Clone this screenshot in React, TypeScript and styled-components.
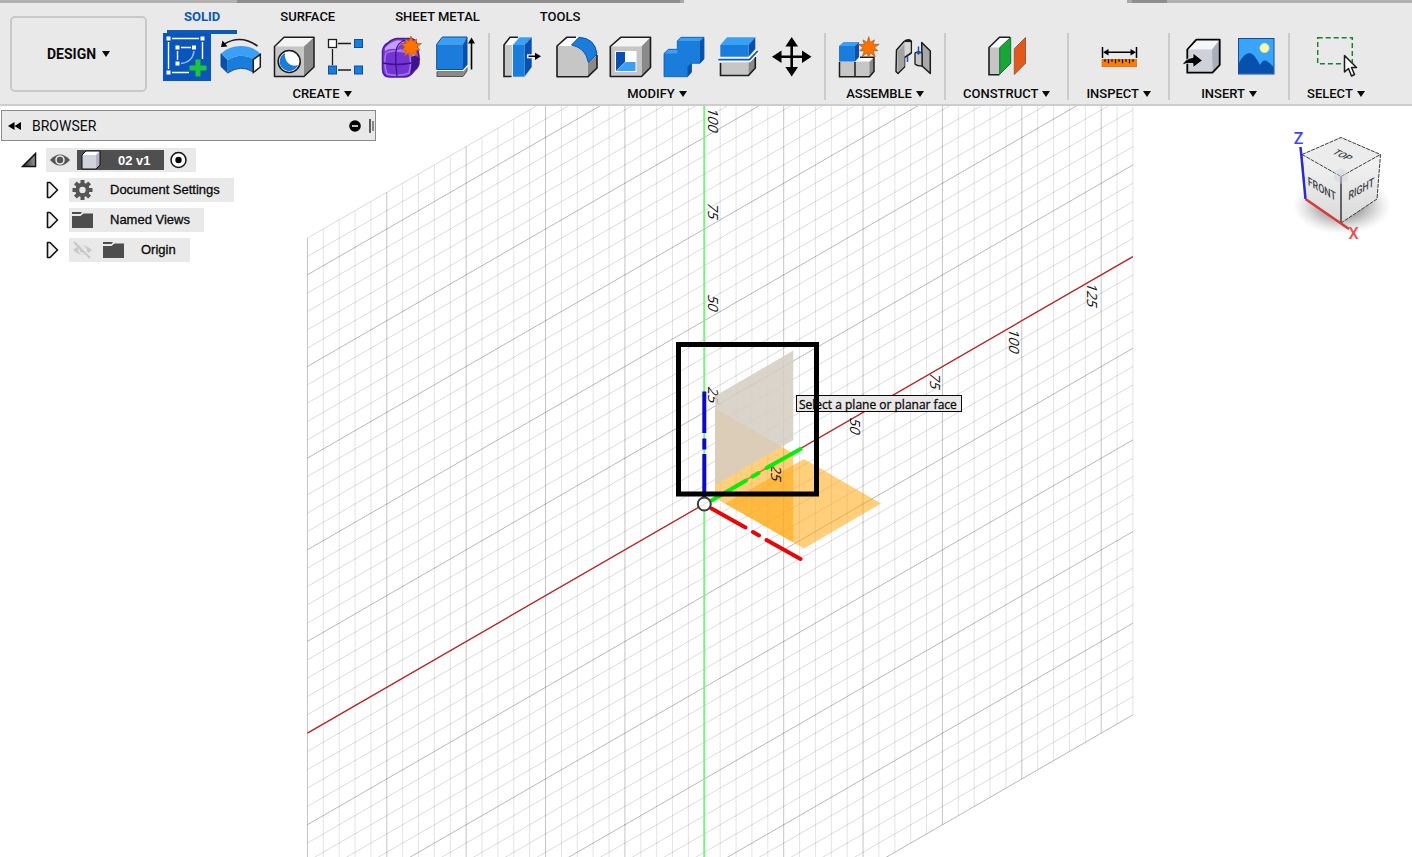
import React from "react";
import styled, { createGlobalStyle } from "styled-components";

const GlobalStyle = createGlobalStyle`
  *, *::before, *::after { box-sizing: border-box; }
  body {
    margin: 0;
    background: #fff;
    color: #0a0a0a;
    font-family: Roboto, "Liberation Sans", sans-serif;
  }
  button { font: inherit; color: inherit; background: none; border: 0; padding: 0; }
`;

const Page = styled.div`
  display: flex;
  flex-direction: column;
  min-height: 100vh;
`;

/* ---------- document tab strip ---------- */

const DocStrip = styled.div`
  display: flex;
  height: 3px;
`;

const DocTab = styled.span<{ $grow: number; $tone: string }>`
  flex: ${(p) => p.$grow} 1 0;
  background: ${(p) => p.$tone};
`;

/* ---------- toolbar ---------- */

const Toolbar = styled.header`
  display: flex;
  height: 103px;
  padding-left: 10px;
  gap: 16px;
  background: #e9e9e9;
  border-bottom: 2px solid #cdcdcd;
`;

const WorkspaceButton = styled.button`
  display: flex;
  align-items: center;
  justify-content: center;
  gap: 6px;
  flex: none;
  width: 137px;
  height: 76px;
  margin-top: 13px;
  border: 2px solid #c8c8c8;
  border-radius: 5px;
  font-size: 14px;
  font-weight: 700;
`;

const Ribbon = styled.div`
  display: flex;
  flex-direction: column;
  flex: none;
`;

const TabList = styled.nav`
  display: flex;
  gap: 26px;
  height: 31px;
  padding-left: 4px;
`;

const Tab = styled.button<{ $active?: boolean }>`
  padding: 0 17px;
  font-size: 13px;
  line-height: 24px;
  font-weight: ${(p) => (p.$active ? 700 : 500)};
  color: ${(p) => (p.$active ? "#0a58b8" : "#0a0a0a")};
  border-bottom: 4px solid ${(p) => (p.$active ? "#0a5cb8" : "transparent")};
`;

const Panels = styled.div`
  display: flex;
  height: 67px;
  margin-top: -1px;
`;

const Panel = styled.section<{ $last?: boolean; $first?: boolean }>`
  display: flex;
  flex-direction: column;
  align-items: center;
  padding: ${(p) => (p.$first ? "0 7px 0 0" : "0 8px")};
  border-right: 2px solid ${(p) => (p.$last ? "transparent" : "#cbcbcb")};
`;

const ToolRow = styled.div`
  display: flex;
  gap: 6px;
`;

const Tool = styled.button<{ $active?: boolean }>`
  width: 48px;
  height: 48px;
  background: ${(p) => (p.$active ? "#0a55bb" : "transparent")};
`;

const IconSvg = styled.svg`
  display: block;
  width: 48px;
  height: 48px;
  overflow: visible;
`;

const PanelLabel = styled.button`
  display: flex;
  align-items: center;
  gap: 4px;
  padding: 0 9px;
  margin-top: 2px;
  font-size: 13px;
  line-height: 21px;
  font-weight: 500;
`;

const CaretSvg = styled.svg`
  display: block;
  width: 8px;
  height: 6px;
`;

const Caret = () => (
  <CaretSvg viewBox="0 0 8 6" aria-hidden="true">
    <path d="M0 0H8L4 6Z" fill="#0a0a0a" />
  </CaretSvg>
);

/* ---------- tool icons ---------- */

const K = "#1c1c1c";
const B1 = "#3aa0f5";
const B2 = "#1b7ddb";
const B3 = "#0850ae";

const burst = (cx: number, cy: number, outer: number, inner: number) =>
  Array.from({ length: 20 }, (_, i) => {
    const r = i % 2 ? inner : i % 4 ? outer * 0.88 : outer;
    const a = (Math.PI * i) / 10 - Math.PI / 2;
    return `${(cx + r * Math.cos(a)).toFixed(2)},${(cy + r * Math.sin(a)).toFixed(2)}`;
  }).join(" ");

const Icon = ({ children }: { children: React.ReactNode }) => (
  <IconSvg viewBox="0 0 48 48" aria-hidden="true">
    {children}
  </IconSvg>
);

const SketchIcon = () => (
  <Icon>
    <g fill="none" stroke="#fff" strokeWidth="1.4">
      <path d="M9 5.5H36M5.5 9V36M39.5 9V26M9 39.5H26M14.5 18V27M18 14.5H28" />
      <path d="M31 18Q30 29 18 30.5" stroke="#8cc4ff" />
    </g>
    <g fill="#fff">
      <rect x="3.500" y="3.500" width="4" height="4" />
      <rect x="37.500" y="3.500" width="4" height="4" />
      <rect x="3.500" y="37.500" width="4" height="4" />
      <rect x="12.500" y="12.500" width="4" height="4" />
      <rect x="29" y="12.500" width="4" height="4" />
      <rect x="12.500" y="28.500" width="4" height="4" />
    </g>
    <path d="M32.500 26.500h5v6h6v5h-6v6h-5v-6h-6v-5h6z" fill="#1fc43a" />
  </Icon>
);

const RevolveIcon = () => (
  <Icon>
    <path d="M4 20.500L10.700 27V40L4 33.500Z" fill={B3} />
    <path d="M10.700 27Q23.500 19 36.300 25.700V39Q23.500 31 10.700 40Z" fill={B2} />
    <path d="M4 20.500Q12 13 23.700 13Q36 13 43.700 21L36.300 26Q23.500 19 10.700 27Z" fill={B1} />
    <path d="M4 20.500V33.500L10.700 40Q23.500 31 36.300 39" fill="none" stroke="#0a4ea3" />
    <path d="M43.300 21.500V34L36.300 39.500V26.500Z" fill="#fff" stroke={K} strokeWidth="1.500" />
    <path d="M40.500 13Q24 1 7 11" fill="none" stroke={K} strokeWidth="1.600" />
    <path d="M4 14L5.500 7.500L10.500 13.500Z" fill="#000" />
  </Icon>
);

const HoleIcon = () => (
  <Icon>
    <path d="M3.500 13.500L13 4.300H43L33 13.500Z" fill="#f4f4f4" />
    <path d="M33 13.500L43 4.300V34L33 43.500Z" fill="#8a8a8a" />
    <path d="M3.500 13.500H33V43.500H3.500Z" fill="#c6c6c6" />
    <path d="M3.500 13.500L13 4.300H43V34L33 43.500H3.500Z" fill="none" stroke={K} strokeWidth="1.500" strokeLinejoin="round" />
    <circle cx="18.200" cy="28.500" r="11" fill="#fff" stroke={K} strokeWidth="1.600" />
    <path d="M14 20A9.500 9.500 0 1 0 27 32Q21 34 17 30Q13 25 14 20Z" fill={B2} />
  </Icon>
);

const PatternIcon = () => (
  <Icon>
    <path d="M13 10.500H26M13 37H26M7.500 16V32" stroke={K} strokeWidth="1.300" />
    <rect x="3.500" y="6.500" width="8" height="8" fill="#fff" stroke={K} strokeWidth="1.300" />
    <g fill={B2} stroke="#0b4f9f">
      <rect x="29.500" y="6.500" width="8" height="8" />
      <rect x="3.500" y="33" width="8" height="8" />
      <rect x="29.500" y="33" width="8" height="8" />
    </g>
  </Icon>
);

const FormIcon = () => (
  <Icon>
    <path d="M3.500 18Q4.500 12 9 10Q13 6 18 5.500H32Q37 6 38 12L40 23V30Q40 34 35 38Q31 44 25 44H11Q3.500 44 3.500 36Z" fill="#7a3fd6" stroke="#4b1aa0" strokeWidth="1.500" />
    <path d="M32 22L40 24V31Q38 36 31 41Q33 34 32 22Z" fill="#3d1490" />
    <path d="M6 15Q10 10 16 8Q20 6 26 9Q20 11 18 16Q10 15 6 18Z" fill="#c7a0ff" />
    <path d="M18 17Q25 15 31 19Q33 17 37 16V22L32 24Q24 20 18 22Z" fill="#b487f5" />
    <path d="M7 20Q14 16 30 20Q33 28 30 40Q20 44 8 41Q4 30 7 20Z" fill="#7434d4" stroke="#a876f2" strokeWidth="1.400" />
    <path d="M17 18Q16 30 18 43M4 30Q18 33 32 30Q37 28 41 26M17 18Q18 10 26 7" fill="none" stroke="#3b128c" strokeWidth="1.300" />
    <polygon points={burst(32, 14, 11, 6)} fill="#ff7200" stroke="#b85a10" strokeWidth="0.700" />
  </Icon>
);

const ExtrudeIcon = () => (
  <Icon>
    <path d="M4 38.500H30.500L34 34V38L30 43.500H4Z" fill="#8a8a8a" stroke="#555" />
    <path d="M3.500 37.500H30.500L35 32" fill="none" stroke="#fff" strokeWidth="1.500" />
    <path d="M3.700 11.300L9.300 4H34L30 11.300Z" fill={B1} />
    <path d="M30 11.300L34 4V31.500L30 36.500Z" fill={B3} />
    <path d="M3.700 11.300H30V36.500H3.700Z" fill={B2} />
    <path d="M3.700 11.300L9.300 4H34V31.500L30 36.500H3.700Z" fill="none" stroke="#0a4ea3" />
    <path d="M38.500 9V36.500" stroke="#000" strokeWidth="1.600" />
    <path d="M38.500 4.500L42 10.500H35Z" fill="#000" />
  </Icon>
);

const PressPullIcon = () => (
  <Icon>
    <path d="M6 12L12 4.300H20L14 12V43.500H6Z" fill="#c6c6c6" />
    <path d="M6 12L12 4.300H21L14 12Z" fill="#fff" />
    <path d="M13.500 43.500H6V12L12 4.300H20" fill="none" stroke={K} strokeWidth="1.600" />
    <path d="M15 12L21.500 4.300H33.700L26.500 12Z" fill={B1} />
    <path d="M26.500 12L33.700 4.300V34L26.500 43.700Z" fill={B3} />
    <path d="M15 12H26.500V43.700H15Z" fill={B2} />
    <path d="M29 23.300H39" stroke="#fff" strokeWidth="4" />
    <path d="M30.500 23.300H38" stroke="#000" strokeWidth="1.600" />
    <path d="M43 23.300L37 19.700V27Z" fill="#000" />
  </Icon>
);

const FilletIcon = () => (
  <Icon>
    <path d="M5 13L14.700 4.300H27L20 13Z" fill="#fff" />
    <path d="M36 30L45 22V35L36 43.700Z" fill="#8a8a8a" />
    <path d="M5 13H19.500Q34 15 36 30V43.700H5Z" fill="#c6c6c6" />
    <path d="M45 22V35L36 43.700H5V13L14.700 4.300H24" fill="none" stroke={K} strokeWidth="1.600" strokeLinejoin="round" />
    <path d="M19.500 12L27 4.300Q43 5 45 21L36.300 29.500Q34 15 19.500 12Z" fill={B2} stroke={B3} />
  </Icon>
);

const ShellIcon = () => (
  <Icon>
    <path d="M4.300 13.500L14.700 4.300H44.500L35.500 13.500Z" fill="#f4f4f4" />
    <path d="M35.500 13.500L44.500 4.300V34.500L35.500 43.500Z" fill="#8a8a8a" />
    <path d="M4.300 13.500H35.500V43.500H4.300Z" fill="#c6c6c6" />
    <path d="M4.300 13.500L14.700 4.300H44.500V34.500L35.500 43.500H4.300Z" fill="none" stroke={K} strokeWidth="1.600" strokeLinejoin="round" />
    <rect x="9" y="18" width="21.500" height="21" fill="#fff" />
    <path d="M10 19H19V29L10 38Z" fill={B3} />
    <path d="M19.500 29H29.500V38H10.500Z" fill={B1} />
  </Icon>
);

const CombineIcon = () => (
  <Icon>
    <path d="M4 20.500L8.500 16.300H17.300V8L21 4.300H44V26L40 30.300H31.500V39L27.500 43.700H4Z" fill={B2} />
    <path d="M4 20.500L8.500 16.300H17.300V20.500ZM17.300 8L21 4.300H44L40 8Z" fill={B1} />
    <path d="M40 8L44 4.300V26L40 30.300ZM27.500 33.500L31.500 30.300V39L27.500 43.700Z" fill={B3} />
    <path d="M4 20.500L8.500 16.300H17.300V8L21 4.300H44V26L40 30.300H31.500V39L27.500 43.700H4Z" fill="none" stroke="#0a58b0" strokeWidth="0.800" />
  </Icon>
);

const SplitIcon = () => (
  <Icon>
    <path d="M6.500 29.500H34.500V42.500H6.500Z" fill="#c6c6c6" />
    <path d="M34.500 30L41.300 23V35L34.500 42.500Z" fill="#8a8a8a" />
    <path d="M6.500 30V42.500H34.500L41.300 35V24" fill="none" stroke={K} strokeWidth="1.600" />
    <path d="M6.300 12L13 4.300H41.300L34.500 12Z" fill={B1} />
    <path d="M34.500 12L41.300 4.300V16L34.500 23.700Z" fill={B3} />
    <path d="M6.300 12H34.500V23.700H6.300Z" fill={B2} />
    <path d="M4.300 26.700H35.500L43.700 18" fill="none" stroke="#fff" strokeWidth="4.500" />
    <path d="M4.300 26.700H35.500L43.700 18" fill="none" stroke="#0a58b8" strokeWidth="1.800" />
  </Icon>
);

const MoveIcon = () => (
  <Icon>
    <path d="M23.700 10V37M10 23.700H37" stroke="#000" strokeWidth="2.600" />
    <path d="M23.700 4L30 13.500H17.400ZM23.700 43.500L30 34H17.400ZM4 23.700L13.500 17.400V30ZM43.500 23.700L34 17.400V30Z" fill="#000" />
  </Icon>
);

const ComponentIcon = () => (
  <Icon>
    <path d="M21 28.500L26 24.300H40V38.500L35.500 43.700H5.500V28.500Z" fill="#c6c6c6" />
    <path d="M21 28.500L26 24.300H40L35.500 28.500Z" fill="#fff" />
    <path d="M35.500 29L40 24.300V38.500L35.500 43.700Z" fill="#8a8a8a" />
    <path d="M5.500 29V43.700H35.500L40 38.500V24.300H26M21 29V43.700" fill="none" stroke={K} strokeWidth="1.500" />
    <path d="M5 13L9.500 9H25L21 13Z" fill={B1} />
    <path d="M21 13L25 9V24L21 28.500Z" fill={B3} />
    <path d="M5 13H21V28.500H5Z" fill={B2} />
    <polygon points={burst(34.700, 14.700, 11, 5.5)} fill="#ff7200" stroke="#a35a1c" strokeWidth="0.700" />
  </Icon>
);

const JointIcon = () => (
  <Icon>
    <path d="M8.500 17L16 8.500Q20 5.500 23.300 8V20L16.500 24.500V34L10 40.500L8 38.500Z" fill="#c2c2c2" stroke={K} strokeWidth="1.500" strokeLinejoin="round" />
    <path d="M10 18L16 12L16.500 24V33L10 39Z" fill="#a2a2a2" />
    <path d="M17 9.500H22.500V19L17 23Z" fill="#d8d8d8" />
    <path d="M17 8H23" stroke={K} strokeWidth="2" />
    <path d="M19.500 23V29M30.500 13.500V20" stroke="#0a58c8" strokeWidth="1.500" />
    <path d="M33.700 9.500L42.300 18V40.500L34 33Z" fill="#a8a8a8" stroke={K} strokeWidth="1.500" strokeLinejoin="round" />
    <path d="M27 20Q30 18 34 20V33Q29 33 27 31Z" fill="#c6c6c6" stroke={K} strokeWidth="1.300" />
    <path d="M27.500 19L30.500 22L33.500 19Z" fill="#0a58c8" />
  </Icon>
);

const PlaneIcon = () => (
  <Icon>
    <path d="M6 14.500L16.500 4.300H28L16.500 14.500Z" fill="#fff" />
    <path d="M6 14.500H16.500V41.700H6Z" fill="#c6c6c6" />
    <path d="M16.500 41.700H6V14.500L16.500 4.300H27" fill="none" stroke={K} strokeWidth="1.600" />
    <path d="M16.700 14.700L27.700 4.300V30.300L16.700 41.300Z" fill="#17a637" stroke="#1d6b2c" />
    <path d="M31.300 15.700L42.500 4.500V30.300L31.300 41.500Z" fill="#e25a1b" stroke="#9c5a3a" />
  </Icon>
);

const MeasureIcon = () => (
  <Icon>
    <path d="M7.500 14V25M41.500 14V25M10 19.300H39" stroke="#000" strokeWidth="1.500" />
    <path d="M8 19.300L13.500 16V22.600ZM41 19.300L35.500 16V22.600Z" fill="#000" />
    <rect x="7" y="26.300" width="34.700" height="7.400" fill="#ff7a00" stroke="#c06a20" strokeWidth="0.600" />
    <path d="M10 26.300v2.500M13.500 26.300v4M17 26.300v2.500M20.500 26.300v4M24 26.300v2.500M27.500 26.300v4M31 26.300v2.500M34.500 26.300v4M38 26.300v2.500" stroke="#000" strokeWidth="1.200" />
  </Icon>
);

const InsertIcon = () => (
  <Icon>
    <path d="M9.300 16.500L18.300 6.700H41.700L34 16.500Z" fill="#f5f6f9" />
    <path d="M34 16.500L41.700 6.700V32L34.500 39.700Z" fill="#a9aebb" />
    <path d="M9.300 16.500H34V39.700H9.300Z" fill="#ced1da" />
    <path d="M9.300 16.500L18.300 6.700H41.700V32L34.500 39.700H9.300Z" fill="none" stroke="#000" strokeWidth="1.800" strokeLinejoin="round" />
    <path d="M4 32Q8 25 15 24.500V20L24.500 27.500L15 34.500V30.500Q9 29.500 4 32Z" fill="#000" stroke="#f1f2f5" strokeWidth="0.800" />
  </Icon>
);

const ImageIcon = () => (
  <Icon>
    <rect x="6.500" y="5.500" width="35.500" height="35.500" fill="#38a4fb" stroke="#0d5099" />
    <path d="M7 30Q12 20 17.500 20Q22 20 28 32Q32 25 36 29Q39 31 41.500 34V40.500H7Z" fill="#0850ae" />
    <circle cx="32.500" cy="15" r="4.500" fill="#fdf6a6" stroke="#e8e6a0" />
  </Icon>
);

const SelectIcon = () => (
  <Icon>
    <rect x="5.700" y="4.700" width="34.600" height="26" fill="none" stroke="#178233" strokeWidth="1.500" strokeDasharray="5 3" />
    <path d="M32.500 22.500V39L36.500 35.500L39.500 43L42.500 41.500L39.500 34.500H44.500Z" fill="#fff" stroke={K} strokeWidth="1.500" strokeLinejoin="round" />
  </Icon>
);

type PanelDef = { label: string; tools: [string, React.FC][] };

const PANELS: PanelDef[] = [
  {
    label: "CREATE",
    tools: [
      ["Create Sketch", SketchIcon],
      ["Revolve", RevolveIcon],
      ["Hole", HoleIcon],
      ["Pattern", PatternIcon],
      ["Create Form", FormIcon],
      ["Extrude", ExtrudeIcon],
    ],
  },
  {
    label: "MODIFY",
    tools: [
      ["Press Pull", PressPullIcon],
      ["Fillet", FilletIcon],
      ["Shell", ShellIcon],
      ["Combine", CombineIcon],
      ["Split Body", SplitIcon],
      ["Move", MoveIcon],
    ],
  },
  {
    label: "ASSEMBLE",
    tools: [
      ["New Component", ComponentIcon],
      ["Joint", JointIcon],
    ],
  },
  { label: "CONSTRUCT", tools: [["Offset Plane", PlaneIcon]] },
  { label: "INSPECT", tools: [["Measure", MeasureIcon]] },
  {
    label: "INSERT",
    tools: [
      ["Insert Derive", InsertIcon],
      ["Canvas", ImageIcon],
    ],
  },
  { label: "SELECT", tools: [["Select", SelectIcon]] },
];

/* ---------- viewport ---------- */

const Viewport = styled.main`
  position: relative;
  flex: 1;
  min-height: 300px;
  overflow: hidden;
`;

const SceneSvg = styled.svg`
  position: absolute;
  inset: 0;
  width: 100%;
  height: 100%;
`;

const ORIGIN = { x: 704.3, y: 504 };
const CELL = 15.875;
const RISE = 18.33;
const SLOPE = 9.163;
const COLS = { from: -25, to: 27 };
const ROWS = { from: -27, to: 25 };

const range = (from: number, to: number) => Array.from({ length: to - from + 1 }, (_, i) => from + i);
const gridX = (c: number) => ORIGIN.x + c * CELL;
const gridY = (c: number, r: number) => ORIGIN.y - c * SLOPE + r * RISE;

const AXIS_LABELS: [string, number, number][] = [
  ["100", 708, 107],
  ["75", 708, 202],
  ["50", 708, 294],
  ["25", 708, 386],
  ["125", 1087, 282],
  ["100", 1009, 328],
  ["75", 930, 372],
  ["50", 850, 417],
  ["25", 771, 464],
];

const AxisText = styled.text`
  font: 400 14px "Open Sans", sans-serif;
  fill: #111;
`;

const HintText = styled.text`
  font: 500 12px "Open Sans", sans-serif;
  fill: #0a0a0a;
  stroke: #0a0a0a;
  stroke-width: 0.3px;
`;

const Scene = () => (
  <SceneSvg viewBox="0 106 1412 751" preserveAspectRatio="xMidYMid slice" role="img" aria-label="Sketch plane selection">
    <g fill="none">
      {range(COLS.from, COLS.to).map((c) => (
        <path
          key={`c${c}`}
          d={`M${gridX(c)} ${gridY(c, ROWS.from)}V${gridY(c, ROWS.to)}`}
          stroke="#000"
          strokeOpacity={c % 5 === 0 ? 0.23 : 0.11}
        />
      ))}
      {range(ROWS.from, ROWS.to).map((r) => (
        <path
          key={`r${r}`}
          d={`M${gridX(COLS.from)} ${gridY(COLS.from, r)}L${gridX(COLS.to)} ${gridY(COLS.to, r)}`}
          stroke="#000"
          strokeOpacity={r % 5 === 0 ? 0.28 : 0.14}
        />
      ))}
    </g>
    <path d="M704.300 106V857" stroke="#7df07d" strokeWidth="2" />
    <path
      d={`M${gridX(COLS.from)} ${gridY(COLS.from, 0)}L${gridX(COLS.to)} ${gridY(COLS.to, 0)}`}
      stroke="#bf2222"
      strokeWidth="1.300"
    />

    <g fill="#ffa711" fillOpacity="0.55">
      <path d="M715 408.300L793.300 453.500V542.500L715 498Z" />
      <path d="M725 503.500L804 459L881 503.500L804 548.500Z" />
    </g>

    {AXIS_LABELS.map(([t, x, y]) => (
      <AxisText key={`${t}-${x}`} transform={`matrix(0 1 -1 -0.35 ${x} ${y})`}>
        {t}
      </AxisText>
    ))}

    <path d="M715 396L793.300 350.500V440L715 485Z" fill="#d5cdc1" fillOpacity="0.86" />

    <g fill="none" strokeWidth="4">
      <path d="M704.300 391.500V433M704.300 438.500V449.500M704.300 454V498" stroke="#0a0acb" />
      <g strokeLinecap="round">
        <path d="M711.500 500.500L746 480.500M752.500 476.500L758.500 473M766.500 468L800.500 449" stroke="#06ee06" />
        <path d="M711.500 508.500L745.500 527.500M753 532L759 535.500M766.500 540L800.500 559" stroke="#e80606" />
      </g>
    </g>
    <circle cx="704.300" cy="504" r="6.500" fill="#fff" fillOpacity="0.85" stroke="#3c3c3c" strokeWidth="2" />

    <rect x="796.500" y="395.500" width="165" height="16" fill="#e9e7e8" stroke="#0a0a0a" />
    <path d="M678.500 344.500H816.500V494H678.500Z" fill="none" stroke="#000" strokeWidth="5" />
    <HintText x="799" y="409">Select a plane or planar face</HintText>
  </SceneSvg>
);

/* ---------- view cube ---------- */

const CubeSvg = styled.svg`
  position: absolute;
  top: 19px;
  right: 17px;
  width: 115px;
  height: 125px;
`;

const FaceText = styled.text`
  font: 500 12px Roboto, sans-serif;
  fill: #3c4148;
  text-anchor: middle;
`;

const AxisLetter = styled.text<{ $tone: string }>`
  font: 500 16px Roboto, sans-serif;
  fill: ${(p) => p.$tone};
  text-anchor: middle;
`;

const ViewCube = () => (
  <CubeSvg viewBox="1280 125 115 125" role="img" aria-label="View cube">
    <defs>
      <radialGradient id="cubeShadow">
        <stop offset="0.300" stopColor="#666" stopOpacity="0.7" />
        <stop offset="0.800" stopColor="#888" stopOpacity="0.180" />
        <stop offset="1" stopColor="#999" stopOpacity="0" />
      </radialGradient>
      <linearGradient id="cubeFront" x1="0" y1="0" x2="0" y2="1">
        <stop offset="0" stopColor="#f4f4f4" />
        <stop offset="1" stopColor="#d9d9d9" />
      </linearGradient>
    </defs>
    <ellipse cx="1342" cy="206" rx="49" ry="28" fill="url(#cubeShadow)" />
    <path d="M1302 154.500L1341 176.500V223L1305.500 199Z" fill="url(#cubeFront)" />
    <path d="M1341 176.500L1380.500 154.500L1377 199L1341 223Z" fill="url(#cubeFront)" />
    <path d="M1302 154.500L1341 137.500L1380.500 154.500L1341 176.500Z" fill="#ececec" />
    <g fill="none" stroke="#3a3a3a">
      <path d="M1302 154.500L1341 137.500L1380.500 154.500L1377 199L1341 223L1305.500 199Z" strokeDasharray="4 1" />
      <path d="M1302 154.500L1341 176.500L1380.500 154.500" strokeDasharray="4 1" />
      <path d="M1341 176.500V223" strokeWidth="1.500" />
    </g>
    <path d="M1334 172L1341 168L1348 172V180L1341 184L1334 180Z" fill="#cfd4e4" fillOpacity="0.5" />
    <FaceText transform="matrix(0.7 0.34 -0.75 0.46 1339.500 157)">TOP</FaceText>
    <FaceText transform="matrix(0.74 0.42 0.05 1 1322 193)">FRONT</FaceText>
    <FaceText transform="matrix(0.74 -0.42 -0.05 1 1361 193)">RIGHT</FaceText>
    <path d="M1300.500 147L1305.500 199" stroke="#2b2bd2" strokeWidth="2.500" />
    <path d="M1305.500 199L1349 229" stroke="#d83a3a" strokeWidth="2.500" />
    <AxisLetter x="1298.500" y="144" $tone="#4444ee">Z</AxisLetter>
    <AxisLetter x="1353.500" y="239" $tone="#f04a4a">X</AxisLetter>
  </CubeSvg>
);

/* ---------- browser panel ---------- */

const BrowserPanel = styled.aside`
  position: relative;
  width: 375px;
  margin: 4px 0 0 1px;
`;

const BrowserHeader = styled.div`
  display: flex;
  align-items: center;
  height: 31px;
  padding: 0 1px 0 6px;
  border: 1px solid #8a8a8a;
  background: #e9e9e9;
`;

const BrowserTitle = styled.h2`
  flex: 1;
  margin: 0 0 0 11px;
  font-size: 14px;
  line-height: 16px;
  font-weight: 400;
`;

const HeaderButton = styled.button`
  display: flex;
  margin-right: 8px;
`;

const Collapse = styled.button`
  display: flex;
`;

const Tree = styled.ul`
  list-style: none;
  margin: 7px 0 0;
  padding: 0;
  display: flex;
  flex-direction: column;
  gap: 6px;
`;

const TreeRow = styled.li<{ $depth: number }>`
  display: flex;
  align-items: center;
  height: 24px;
  gap: ${(p) => (p.$depth ? 10 : 9)}px;
  padding-left: ${(p) => (p.$depth ? 45 : 20)}px;
`;

const Expander = styled.button`
  display: flex;
`;

const Node = styled.div`
  display: flex;
  align-items: center;
  height: 24px;
  padding: 0 14px 0 3px;
  background: #e9e9e9;
`;

const RootNode = styled(Node)`
  gap: 6px;
  padding: 0 9px 0 3px;
`;

const RootName = styled.button`
  display: flex;
  align-items: center;
  gap: 17px;
  height: 20px;
  padding: 0 13px 0 4px;
  background: #4f4f4f;
  color: #fff;
  font: 700 13px "Liberation Sans", sans-serif;
`;

const NodeName = styled.button`
  margin-left: 17px;
  font-family: "Liberation Sans", sans-serif;
  font-size: 13px;
  line-height: 20px;
  -webkit-text-stroke: 0.3px #0a0a0a;
`;

const ToggleButton = styled.button`
  display: flex;
  margin-right: 10px;
`;

const Glyph = ({ w, h, children }: { w: number; h: number; children: React.ReactNode }) => (
  <svg width={w} height={h} viewBox={`0 0 ${w} ${h}`} aria-hidden="true">
    {children}
  </svg>
);

const ClosedArrow = () => (
  <Expander aria-label="Expand">
    <Glyph w={13} h={18}>
      <path d="M1.500 1.500H4L11.500 9L4 16.500H1.500Z" fill="#f2f2f2" stroke="#111" strokeWidth="1.600" strokeLinejoin="round" />
    </Glyph>
  </Expander>
);

const Folder = () => (
  <Glyph w={21} h={18}>
    <path d="M0 1H10L8.500 3H0ZM0 5H8.500L11.500 2.500H21V17H0Z" fill="#4d4d4d" />
  </Glyph>
);

const Gear = () => (
  <Glyph w={21} h={20}>
    <g fill="#555">
      {range(0, 7).map((i) => (
        <rect key={i} x="8.500" y="0" width="4" height="5" transform={`rotate(${i * 45} 10.500 10)`} />
      ))}
    </g>
    <circle cx="10.500" cy="10" r="5.200" fill="none" stroke="#555" strokeWidth="4" />
  </Glyph>
);

const EyeOff = () => (
  <Glyph w={21} h={18}>
    <path d="M1 9Q10.500 0 20 9Q10.500 18 1 9Z" fill="#c8c8c8" />
    <circle cx="10.500" cy="9" r="3.500" fill="none" stroke="#e9e9e9" strokeWidth="1.500" />
    <path d="M4 0L19 17" stroke="#e9e9e9" strokeWidth="3" />
    <path d="M2 1L18 17" stroke="#c8c8c8" strokeWidth="2" />
  </Glyph>
);

const Browser = () => (
  <BrowserPanel>
    <BrowserHeader>
      <Collapse aria-label="Collapse browser">
        <Glyph w={13} h={10}>
          <path d="M0 5L6.500 1V9ZM6.500 5L13 1V9Z" fill="#000" />
        </Glyph>
      </Collapse>
      <BrowserTitle>BROWSER</BrowserTitle>
      <HeaderButton aria-label="Hide all">
        <Glyph w={12} h={12}>
          <circle cx="6" cy="6" r="5.800" fill="#000" />
          <path d="M3 6H9" stroke="#fff" strokeWidth="1.500" />
        </Glyph>
      </HeaderButton>
      <Glyph w={5} h={14}>
        <path d="M1 0V14" stroke="#111" strokeWidth="1.300" />
        <path d="M4 2V12" stroke="#555" strokeWidth="1.300" />
      </Glyph>
    </BrowserHeader>
    <Tree>
      <TreeRow $depth={0}>
        <Expander aria-label="Collapse">
          <Glyph w={16} h={16}>
            <defs>
              <linearGradient id="openArrow">
                <stop offset="0" stopColor="#222" />
                <stop offset="1" stopColor="#999" />
              </linearGradient>
            </defs>
            <path d="M1.500 14.500L14.500 1.500V14.500Z" fill="url(#openArrow)" stroke="#111" strokeWidth="1.500" />
          </Glyph>
        </Expander>
        <RootNode>
          <Expander aria-label="Toggle visibility">
            <Glyph w={22} h={16}>
              <path d="M1 8Q11 -3 21 8Q11 19 1 8Z" fill="#555" />
              <circle cx="11" cy="8" r="4" fill="#555" stroke="#e9e9e9" strokeWidth="1.600" />
            </Glyph>
          </Expander>
          <RootName>
            <Glyph w={20} h={20}>
              <path d="M1 5L5 1H19V15L15 19H1Z" fill="#fff" />
              <path d="M15 5L19 1V15L15 19Z" fill="#aeb4c2" />
              <path d="M1 5H15V19H1Z" fill="#cfd3dd" />
              <path d="M1 5L5 1H19V15L15 19H1Z" fill="none" stroke="#111" />
            </Glyph>
            02 v1
          </RootName>
          <Expander aria-label="Activate component">
            <Glyph w={17} h={18}>
              <circle cx="8.500" cy="9" r="7.500" fill="#fff" stroke="#111" strokeWidth="1.500" />
              <circle cx="8.500" cy="9" r="3.200" fill="#000" />
            </Glyph>
          </Expander>
        </RootNode>
      </TreeRow>
      <TreeRow $depth={1}>
        <ClosedArrow />
        <Node>
          <Gear />
          <NodeName>Document Settings</NodeName>
        </Node>
      </TreeRow>
      <TreeRow $depth={1}>
        <ClosedArrow />
        <Node>
          <Folder />
          <NodeName>Named Views</NodeName>
        </Node>
      </TreeRow>
      <TreeRow $depth={1}>
        <ClosedArrow />
        <Node>
          <ToggleButton aria-label="Show origin">
            <EyeOff />
          </ToggleButton>
          <Folder />
          <NodeName>Origin</NodeName>
        </Node>
      </TreeRow>
    </Tree>
  </BrowserPanel>
);

export default function App() {
  return (
    <Page>
      <GlobalStyle />
      <DocStrip>
        <DocTab $grow={237} $tone="#b0b0b0" />
        <DocTab $grow={443} $tone="#8e8e8e" />
        <DocTab $grow={4} $tone="#a8a8a8" />
        <DocTab $grow={443} $tone="#e9e9e9" />
        <DocTab $grow={5} $tone="#a8a8a8" />
        <DocTab $grow={35} $tone="#8e8e8e" />
        <DocTab $grow={245} $tone="#b0b0b0" />
      </DocStrip>
      <Toolbar>
        <WorkspaceButton>
          DESIGN <Caret />
        </WorkspaceButton>
        <Ribbon>
          <TabList aria-label="Toolbar tabs">
            <Tab $active>SOLID</Tab>
            <Tab>SURFACE</Tab>
            <Tab>SHEET METAL</Tab>
            <Tab>TOOLS</Tab>
          </TabList>
          <Panels>
            {PANELS.map((panel, i) => (
              <Panel key={panel.label} $first={i === 0} $last={i === PANELS.length - 1}>
                <ToolRow>
                  {panel.tools.map(([name, Drawing], j) => (
                    <Tool key={name} aria-label={name} $active={i === 0 && j === 0}>
                      <Drawing />
                    </Tool>
                  ))}
                </ToolRow>
                <PanelLabel>
                  {panel.label}
                  <Caret />
                </PanelLabel>
              </Panel>
            ))}
          </Panels>
        </Ribbon>
      </Toolbar>
      <Viewport>
        <Scene />
        <Browser />
        <ViewCube />
      </Viewport>
    </Page>
  );
}
